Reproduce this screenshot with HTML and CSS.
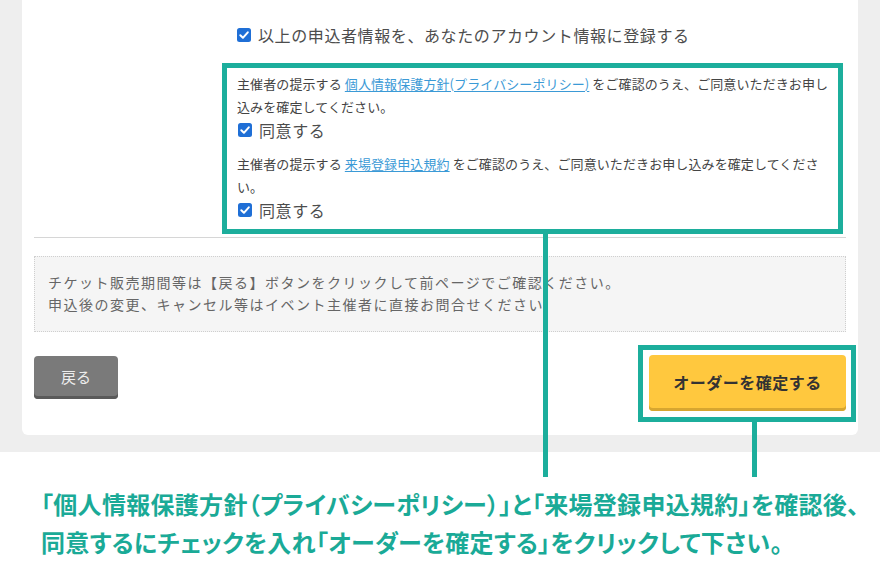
FILE: index.html
```html
<!DOCTYPE html>
<html lang="ja">
<head>
<meta charset="utf-8">
<title>Order confirm</title>
<link rel="stylesheet" href="styles.css">
</head>
<body>
<div class="frame">
  <div class="shot">
    <div class="card">
      <div class="check-row account-row">
        <span class="cb"><svg viewBox="0 0 14 14" width="14" height="14"><rect x="0" y="0" width="14" height="14" rx="2.5" fill="#1f6fd6"/><path d="M3.3 7.3 L5.9 9.8 L10.8 4.3" fill="none" stroke="#fff" stroke-width="2" stroke-linecap="round" stroke-linejoin="round"/></svg></span>
        <span class="label-lg">以上の申込者情報を、あなたのアカウント情報に登録する</span>
      </div>

      <div class="agree-box">
        <p class="agree-text">主催者の提示する <a class="link" href="#">個人情報保護方針(プライバシーポリシー)</a> をご確認のうえ、ご同意いただきお申し<br>込みを確定してください。</p>
        <div class="check-row">
          <span class="cb"><svg viewBox="0 0 14 14" width="14" height="14"><rect x="0" y="0" width="14" height="14" rx="2.5" fill="#1f6fd6"/><path d="M3.3 7.3 L5.9 9.8 L10.8 4.3" fill="none" stroke="#fff" stroke-width="2" stroke-linecap="round" stroke-linejoin="round"/></svg></span>
          <span class="label-lg">同意する</span>
        </div>
        <p class="agree-text second">主催者の提示する <a class="link" href="#">来場登録申込規約</a> をご確認のうえ、ご同意いただきお申し込みを確定してくださ<br>い。</p>
        <div class="check-row">
          <span class="cb"><svg viewBox="0 0 14 14" width="14" height="14"><rect x="0" y="0" width="14" height="14" rx="2.5" fill="#1f6fd6"/><path d="M3.3 7.3 L5.9 9.8 L10.8 4.3" fill="none" stroke="#fff" stroke-width="2" stroke-linecap="round" stroke-linejoin="round"/></svg></span>
          <span class="label-lg">同意する</span>
        </div>
      </div>

      <div class="rule"></div>

      <div class="note">
        <p>チケット販売期間等は【戻る】ボタンをクリックして前ページでご確認ください。</p>
        <p>申込後の変更、キャンセル等はイベント主催者に直接お問合せください</p>
      </div>

      <div class="actions">
        <button class="btn-back" type="button">戻る</button>
        <div class="order-frame">
          <button class="btn-order" type="button">オーダーを確定する</button>
        </div>
      </div>
    </div>
  </div>

  <div class="caption">
    <p>「個人情報保護方針（プライバシーポリシー）」と「来場登録申込規約」を確認後、</p>
    <p>同意するにチェックを入れ「オーダーを確定する」をクリックして下さい。</p>
  </div>

  <div class="connector connector-a"></div>
  <div class="connector connector-b"></div>
</div>
</body>
</html>
```

FILE: styles.css
```css
* { box-sizing: border-box; }

html, body {
  margin: 0;
  padding: 0;
}

body {
  width: 880px;
  height: 586px;
  overflow: hidden;
  background: #ffffff;
  font-family: "Noto Sans CJK JP", "Noto Sans", sans-serif;
  color: #4a4a4a;
}

.frame {
  position: relative;
  width: 880px;
  height: 586px;
}

.shot {
  background: #eeeeee;
  padding: 0 22px 17px 22px;
}

.card {
  background: #ffffff;
  border-radius: 0 0 6px 6px;
  padding: 23px 12px 13px 12px;
  display: flex;
  flex-direction: column;
}

.check-row {
  display: flex;
  align-items: center;
  height: 24px;
}

.account-row {
  margin-left: 203px;
}

.cb {
  display: flex;
  width: 14px;
  height: 14px;
  margin-right: 7px;
  flex: none;
}

.label-lg {
  font-size: 16px;
  line-height: 24px;
  letter-spacing: 0.6px;
  color: #4d4d4d;
}

.agree-box {
  margin: 16px 3px 0 188px;
  border: 5px solid #1cae9c;
  padding: 4px 0 7px 10px;
}

.agree-box .check-row {
  margin-left: 1px;
}

.agree-text {
  margin: 0;
  font-size: 13px;
  line-height: 23px;
  letter-spacing: 0.1px;
  color: #444444;
  white-space: nowrap;
}

.agree-text.second {
  margin-top: 10px;
}

.link {
  color: #3b9ad6;
  text-decoration: underline;
  text-underline-offset: 2px;
}

.rule {
  height: 1px;
  background: #d6d6d6;
  margin-top: 3px;
}

.note {
  margin-top: 18px;
  background: #f5f5f5;
  border: 1px dotted #cfcfcf;
  padding: 14px 13px 16px 13px;
}

.note p {
  margin: 0;
  font-size: 14px;
  line-height: 22px;
  letter-spacing: 1.5px;
  color: #666666;
}

.actions {
  margin-top: 13px;
  display: flex;
  justify-content: space-between;
  align-items: flex-start;
}

.btn-back {
  margin-top: 11px;
  width: 84px;
  height: 43px;
  border: none;
  border-radius: 4px;
  background: #7a7a7a;
  box-shadow: inset 0 -3px 0 #5a5a5a;
  color: #ececec;
  font-family: "Noto Sans CJK JP", sans-serif;
  font-size: 15px;
  padding: 0 0 3px 0;
}

.order-frame {
  margin-right: -10px;
  border: 5px solid #1cae9c;
  padding: 5px 5px 6px 6px;
}

.btn-order {
  display: block;
  width: 197px;
  height: 56px;
  border: none;
  border-radius: 4px;
  background: #ffc83e;
  box-shadow: inset 0 -3px 0 #d7a630;
  color: #333333;
  font-family: "Noto Sans CJK JP", sans-serif;
  font-weight: 700;
  font-size: 16px;
  letter-spacing: 0.5px;
  padding: 0 0 2px 0;
}

.caption {
  background: #ffffff;
  padding: 33px 0 0 41px;
}

.caption p {
  margin: 0;
  font-size: 24px;
  line-height: 38px;
  font-weight: 700;
  color: #1aaa97;
  letter-spacing: 0.3px;
  font-feature-settings: "palt";
  white-space: nowrap;
}

.connector {
  position: absolute;
  width: 5px;
  background: #1cae9c;
  z-index: 2;
}

.connector-a {
  left: 543px;
  top: 230px;
  height: 247px;
}

.connector-b {
  left: 752px;
  top: 420px;
  height: 57px;
}
```
